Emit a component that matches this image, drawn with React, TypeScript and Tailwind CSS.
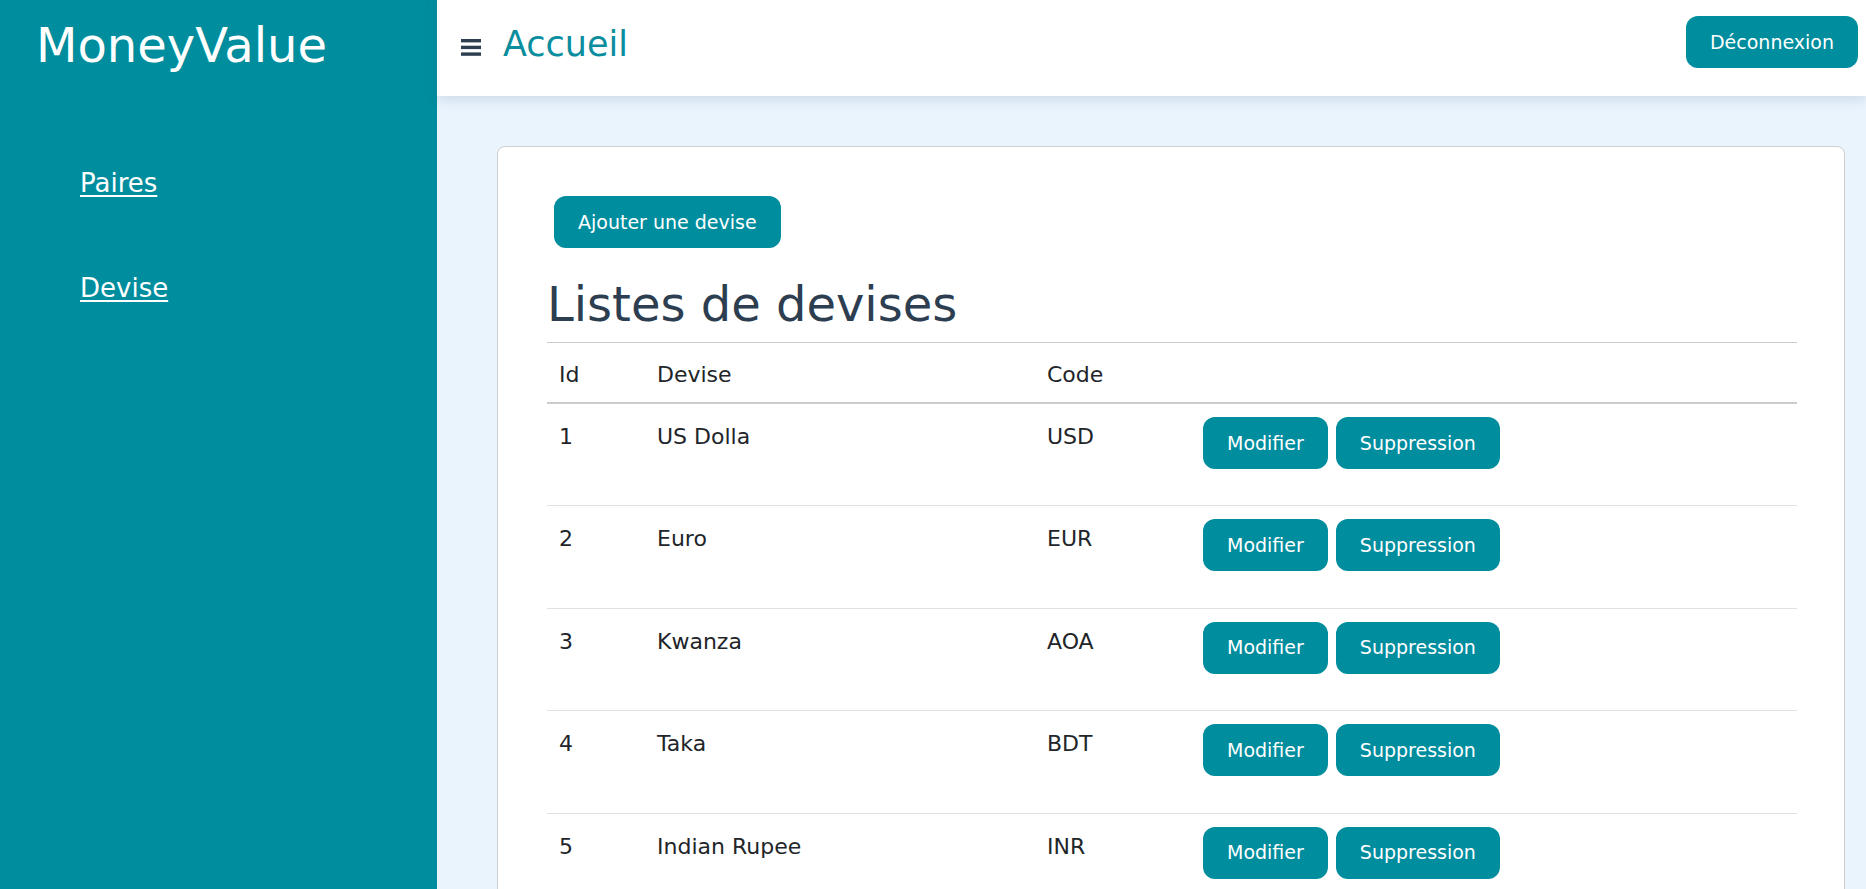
import React from "react";

const rows = [
  { id: 1, name: "US Dolla", code: "USD" },
  { id: 2, name: "Euro", code: "EUR" },
  { id: 3, name: "Kwanza", code: "AOA" },
  { id: 4, name: "Taka", code: "BDT" },
  { id: 5, name: "Indian Rupee", code: "INR" },
];

function Btn({ children }: { children: React.ReactNode }) {
  return (
    <button className="h-[52px] px-6 rounded-[12px] bg-[#008d9e] text-white text-[19px] leading-none whitespace-nowrap">
      {children}
    </button>
  );
}

export default function App() {
  return (
    <div
      className="flex h-screen w-full overflow-hidden"
      style={{ fontFamily: '"DejaVu Sans", Verdana, sans-serif' }}
    >
      <aside className="w-[437px] shrink-0 bg-[#008d9e] text-white">
        <div className="pl-[36px] pt-[17px] text-[48px] leading-[57px]">MoneyValue</div>
        <nav className="mt-[90px] pl-[80px] flex flex-col gap-[66px] text-[26px] leading-[39px]">
          <a href="#" className="underline underline-offset-[3px] decoration-[2px] w-fit">Paires</a>
          <a href="#" className="underline underline-offset-[3px] decoration-[2px] w-fit">Devise</a>
        </nav>
      </aside>

      <div className="flex-1 flex flex-col min-w-0">
        <header className="relative z-10 h-[96px] shrink-0 bg-white flex items-start pl-[24px] pr-[8px] shadow-[0_3px_12px_rgba(60,90,120,0.18)]">
          <svg width="20" height="17" viewBox="0 0 20 17" className="mt-[39px]">
            <rect x="0" y="0" width="20" height="3.4" fill="#2c3e50" />
            <rect x="0" y="6.7" width="20" height="3.4" fill="#2c3e50" />
            <rect x="0" y="13.4" width="20" height="3.4" fill="#2c3e50" />
          </svg>
          <h1 className="ml-[22px] mt-[23px] text-[35px] leading-[42px] text-[#0a8d9e]">Accueil</h1>
          <div className="ml-auto mt-[16px]">
            <Btn>Déconnexion</Btn>
          </div>
        </header>

        <main className="flex-1 bg-[#eaf4fd] pl-[60px] pr-[21px] pt-[50px] overflow-hidden">
          <div className="bg-white border border-[#cfcfcf] rounded-[8px] pt-[49px] pl-[49px] pr-[47px] pb-10">
            <div className="ml-[7px]">
              <Btn>Ajouter une devise</Btn>
            </div>
            <h2 className="mt-[28px] text-[48px] leading-[56px] text-[#2c3e50]">Listes de devises</h2>
            <div className="mt-[10px] text-[22px] leading-[33px] text-[#212529]">
              <div className="grid grid-cols-[98px_390px_148px_1fr] h-[62px] border-t border-b-2 border-[#cccccc]">
                <div className="pl-[12px] pt-[15px]">Id</div>
                <div className="pl-[12px] pt-[15px]">Devise</div>
                <div className="pl-[12px] pt-[15px]">Code</div>
                <div />
              </div>
              {rows.map((r) => (
                <div
                  key={r.id}
                  className="grid grid-cols-[98px_390px_148px_1fr] h-[102.4px] border-b border-[#dee2e6]"
                >
                  <div className="pl-[12px] pt-[16px]">{r.id}</div>
                  <div className="pl-[12px] pt-[16px]">{r.name}</div>
                  <div className="pl-[12px] pt-[16px]">{r.code}</div>
                  <div className="pl-[20px] pt-[13px] flex items-start gap-[8px]">
                    <Btn>Modifier</Btn>
                    <Btn>Suppression</Btn>
                  </div>
                </div>
              ))}
            </div>
          </div>
        </main>
      </div>
    </div>
  );
}
